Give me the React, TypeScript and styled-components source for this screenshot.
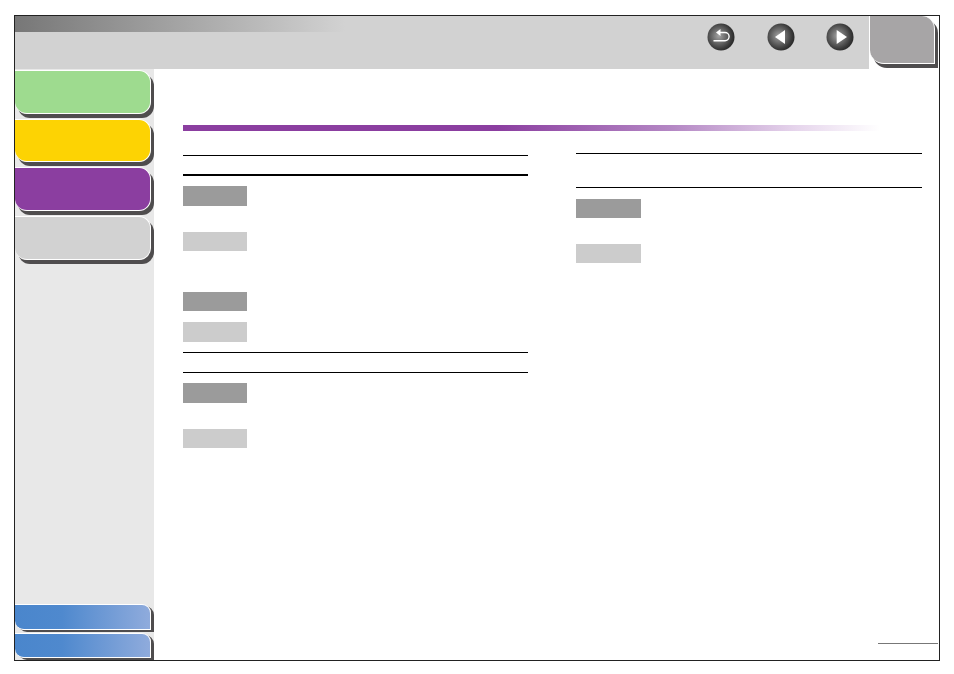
import React from 'react';
import styled, { createGlobalStyle } from 'styled-components';

const GlobalStyle = createGlobalStyle`
  html, body {
    margin: 0;
    padding: 0;
    background: #fff;
    font-family: "Liberation Sans", Arial, sans-serif;
  }
`;

const Frame = styled.div`
  box-sizing: border-box;
  display: flex;
  flex-direction: column;
  width: 926px;
  height: 646px;
  margin: 15px 0 0 14px;
  border: 1px solid #222;
`;

const Header = styled.div`
  display: flex;
  flex: 0 0 53px;
`;

const TopBar = styled.div`
  display: flex;
  justify-content: flex-end;
  align-items: flex-start;
  gap: 31.5px;
  width: 854px;
  padding: 7px 15px 0 0;
  box-sizing: border-box;
  background: linear-gradient(to right, #777 0%, #d2d2d2 100%) no-repeat 0 0 / 330px 16px, #d2d2d2;
`;

const PageTab = styled.div`
  box-sizing: border-box;
  width: 65px;
  height: 48px;
  margin-left: 1px;
  background: #a7a5a6;
  border-right: 1px solid #fff;
  border-bottom: 1px solid #fff;
  border-radius: 0 13px 0 14px;
  box-shadow: 3px 4px 0 #4f4d4e;
`;

const Body = styled.div`
  display: flex;
  flex: 1;
  min-height: 0;
`;

const Sidebar = styled.nav`
  display: flex;
  flex-direction: column;
  flex: 0 0 139px;
  padding-top: 1px;
  box-sizing: border-box;
  background: #e8e8e8;
`;

const NavButton = styled.div<{ $color: string; $height?: number }>`
  box-sizing: border-box;
  width: 136px;
  height: ${({ $height }) => $height ?? 44}px;
  margin-bottom: 5px;
  background: ${({ $color }) => $color};
  border: 1px solid #fff;
  border-left: 0;
  border-radius: 0 12px 12px 12px;
  box-shadow: 3px 4px 0 #4f4d4e;
`;

const LinkButton = styled.div`
  box-sizing: border-box;
  width: 136px;
  height: 26px;
  margin-bottom: 3px;
  background: linear-gradient(to right, #4a86cc 0%, #4f89ce 35%, #8fabdc 100%);
  border: 1px solid #fff;
  border-left: 0;
  border-radius: 0 9px 0 9px;
  box-shadow: 3px 2px 0 #4f4d4e;
`;

const SidebarBottom = styled.div`
  display: flex;
  flex-direction: column;
  margin-top: auto;
  & > :last-child {
    height: 25px;
    margin-bottom: 2px;
  }
`;

const Content = styled.main`
  display: flex;
  flex-direction: column;
  flex: 1;
  min-width: 0;
  padding: 56px 0 0 29px;
`;

const TitleRule = styled.div`
  width: 697px;
  height: 6px;
  background: linear-gradient(to right, #8b3ea0 0%, #8b3ea0 45%, #b487c4 70%, #e6d5ec 88%, #fff 100%);
`;

const Columns = styled.div`
  display: grid;
  grid-template-columns: 345px 346px;
  column-gap: 48px;
  margin-top: 22px;
`;

const Column = styled.div`
  display: flex;
  flex-direction: column;
`;

const Rule = styled.div<{ $top: number; $weight?: number }>`
  height: ${({ $weight }) => $weight ?? 1}px;
  margin-top: ${({ $top }) => $top}px;
  background: #000;
`;

const Label = styled.div<{ $top: number; $height: number; $dark?: boolean; $wide?: boolean }>`
  width: ${({ $wide }) => ($wide ? 65 : 64)}px;
  height: ${({ $height }) => $height}px;
  margin-top: ${({ $top }) => $top}px;
  background: ${({ $dark }) => ($dark ? '#9b9b9b' : '#cccccc')};
`;

const PageLine = styled.div`
  align-self: flex-end;
  width: 60px;
  height: 1px;
  margin: auto 1px 16px 0;
  background: #777;
`;

const RoundSvg = styled.svg`
  display: block;
  flex: none;
  width: 28px;
  height: 28px;
`;

const Round: React.FC<{ id: string; children: React.ReactNode }> = ({ id, children }) => (
  <RoundSvg viewBox="0 0 28 28">
    <defs>
      <radialGradient id={id} cx="0.42" cy="0.46" r="0.6">
        <stop offset="0" stopColor="#a4a4a4" />
        <stop offset="0.4" stopColor="#6e6e6e" />
        <stop offset="0.8" stopColor="#3a3a3a" />
        <stop offset="1" stopColor="#262626" />
      </radialGradient>
    </defs>
    <circle cx="14" cy="14" r="13.5" fill={`url(#${id})`} />
    {children}
  </RoundSvg>
);

const App: React.FC = () => (
  <>
    <GlobalStyle />
    <Frame>
      <Header>
        <TopBar>
          <Round id="back">
            <path d="M12 9.5h6a4.1 4.1 0 0 1 0 8.2H6.5" fill="none" stroke="#fff" strokeWidth="1.4" />
            <path d="M13.5 6v7l-4.5-3.5z" fill="#fff" />
          </Round>
          <Round id="prev">
            <path d="M18 7v14L8 14z" fill="#fff" />
          </Round>
          <Round id="next">
            <path d="M10.7 7v14L21 14z" fill="#fff" />
          </Round>
        </TopBar>
        <PageTab />
      </Header>
      <Body>
        <Sidebar>
          <NavButton $color="#9edb8f" />
          <NavButton $color="#fdd303" $height={43} />
          <NavButton $color="#8b3ea0" />
          <NavButton $color="#d2d2d2" />
          <SidebarBottom>
            <LinkButton />
            <LinkButton />
          </SidebarBottom>
        </Sidebar>
        <Content>
          <TitleRule />
          <Columns>
            <Column>
              <Rule $top={2} />
              <Rule $top={18} $weight={2} />
              <Label $top={10} $height={20} $dark />
              <Label $top={26} $height={19} />
              <Label $top={41} $height={19} $dark />
              <Label $top={11} $height={20} />
              <Rule $top={10} />
              <Rule $top={19} />
              <Label $top={10} $height={20} $dark />
              <Label $top={26} $height={19} />
            </Column>
            <Column>
              <Rule $top={0} />
              <Rule $top={33} />
              <Label $top={11} $height={19} $dark $wide />
              <Label $top={26} $height={19} $wide />
            </Column>
          </Columns>
          <PageLine />
        </Content>
      </Body>
    </Frame>
  </>
);

export default App;
